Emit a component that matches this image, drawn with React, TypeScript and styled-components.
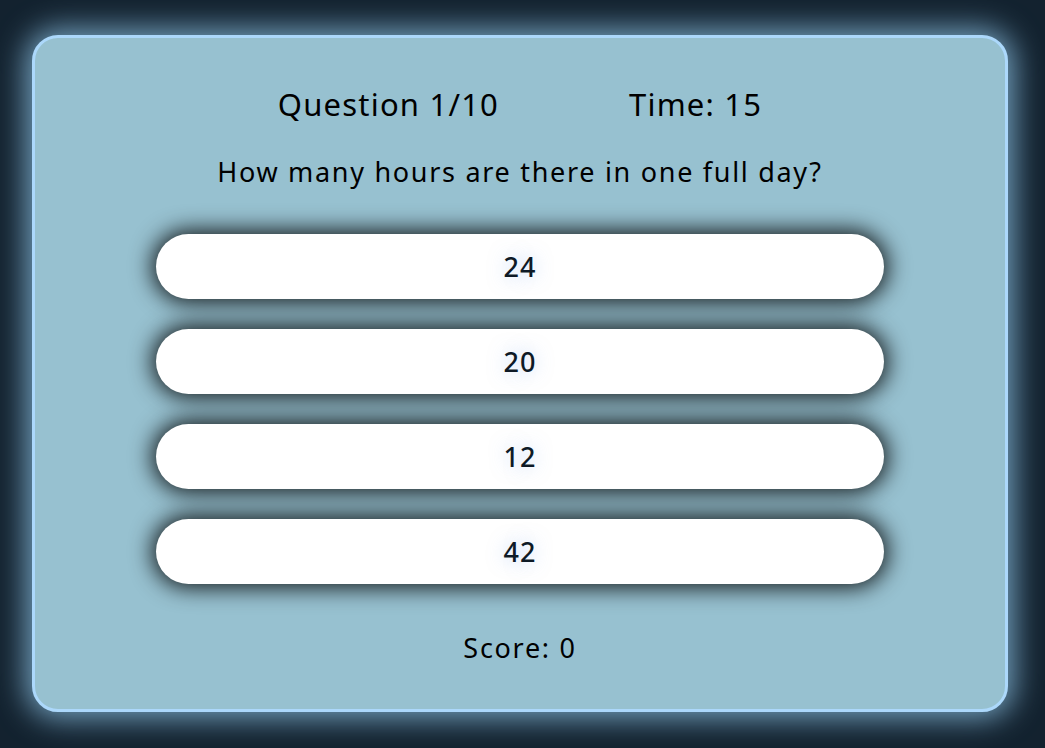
import React from "react";
import styled, { createGlobalStyle } from "styled-components";

const Global = createGlobalStyle`
  html, body { margin: 0; padding: 0; }
  body {
    background: #13222f;
    font-family: "Noto Sans", "Open Sans", sans-serif;
    color: #000;
  }
`;

const Page = styled.div`
  padding: 35px 37px 36px 32px;
`;

const Card = styled.div`
  box-sizing: border-box;
  width: 976px;
  height: 677px;
  background: #97c1d0;
  border: 3px solid #acd8fb;
  border-radius: 26px;
  box-shadow: 0 0 30px 6px rgba(150, 205, 240, 0.75);
  padding: 46px 0 43px;
  display: flex;
  flex-direction: column;
  align-items: center;
`;

const Header = styled.div`
  display: flex;
  justify-content: center;
  gap: 130px;
  font-size: 31px;
  line-height: 40px;
  letter-spacing: 1.2px;
`;

const Question = styled.div`
  margin-top: 30px;
  font-size: 27px;
  line-height: 36px;
  letter-spacing: 1.7px;
`;

const Answers = styled.div`
  margin-top: 44px;
  display: flex;
  flex-direction: column;
  gap: 30px;
  width: 728px;
`;

const Answer = styled.button`
  height: 65px;
  border: none;
  border-radius: 33px;
  background: #fff;
  box-shadow: 0 0 22px 4px rgba(0, 0, 0, 0.85);
  font-family: "Noto Sans", "Open Sans", sans-serif;
  font-size: 27px;
  font-weight: 500;
  letter-spacing: 1px;
  color: #0e1a26;
  text-shadow: 0 0 18px rgba(120, 170, 240, 0.5);
  cursor: pointer;
  padding: 0;
`;

const Score = styled.div`
  margin-top: 46px;
  font-size: 27px;
  line-height: 36px;
  letter-spacing: 1.7px;
`;

const answers = ["24", "20", "12", "42"];

export default function App() {
  return (
    <>
      <Global />
      <Page>
        <Card>
          <Header>
            <span>Question 1/10</span>
            <span>Time: 15</span>
          </Header>
          <Question>How many hours are there in one full day?</Question>
          <Answers>
            {answers.map((a) => (
              <Answer key={a}>{a}</Answer>
            ))}
          </Answers>
          <Score>Score: 0</Score>
        </Card>
      </Page>
    </>
  );
}
